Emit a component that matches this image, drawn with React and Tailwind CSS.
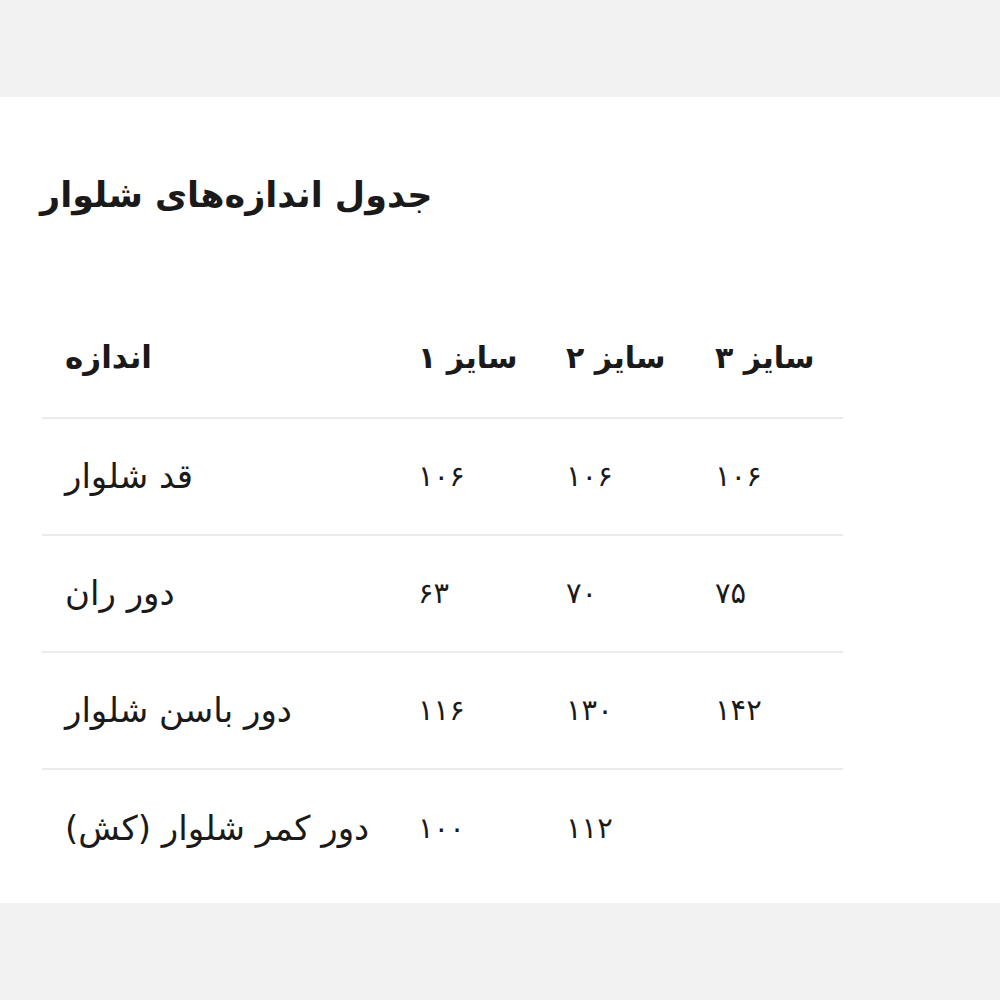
export default function App() {
  const rows = [
    ["قد شلوار", "۱۰۶", "۱۰۶", "۱۰۶"],
    ["دور ران", "۶۳", "۷۰", "۷۵"],
    ["دور باسن شلوار", "۱۱۶", "۱۳۰", "۱۴۲"],
    ["دور کمر شلوار (کش)", "۱۰۰", "۱۱۲", ""],
  ];
  return (
    <div className="w-[1000px] h-[1000px] bg-[#f2f2f2] flex flex-col" style={{ fontFamily: '"DejaVu Sans", sans-serif' }}>
      <div className="h-[97px] shrink-0" />
      <div className="h-[806px] bg-white pt-[68px] text-[#1a1a1a]">
        <h1 className="ml-[40px] text-[35px] font-bold leading-[60px] w-fit" dir="rtl">جدول اندازه‌های شلوار</h1>
        <div className="ml-[42px] mt-[73px] w-[801px]">
          <div className="grid grid-cols-[353px_148px_149px_151px] h-[121px] items-center border-b-2 border-[#ebebeb]">
            <div className="pl-[23px] text-[31px] font-bold"><span dir="rtl">اندازه</span></div>
            <div className="pl-[23px] text-[30px] font-bold"><span dir="rtl">سایز ۱</span></div>
            <div className="pl-[23px] text-[30px] font-bold"><span dir="rtl">سایز ۲</span></div>
            <div className="pl-[23px] text-[30px] font-bold"><span dir="rtl">سایز ۳</span></div>
          </div>
          {rows.map((r, i) => (
            <div key={i} className={`grid grid-cols-[353px_148px_149px_151px] h-[117px] items-center ${i < 3 ? "border-b-2 border-[#ebebeb]" : ""}`}>
              {r.map((c, j) => (
                <div key={j} className={`pl-[23px] ${j === 0 ? "text-[34px]" : "text-[29px]"}`}><span dir="rtl">{c}</span></div>
              ))}
            </div>
          ))}
        </div>
      </div>
    </div>
  );
}
